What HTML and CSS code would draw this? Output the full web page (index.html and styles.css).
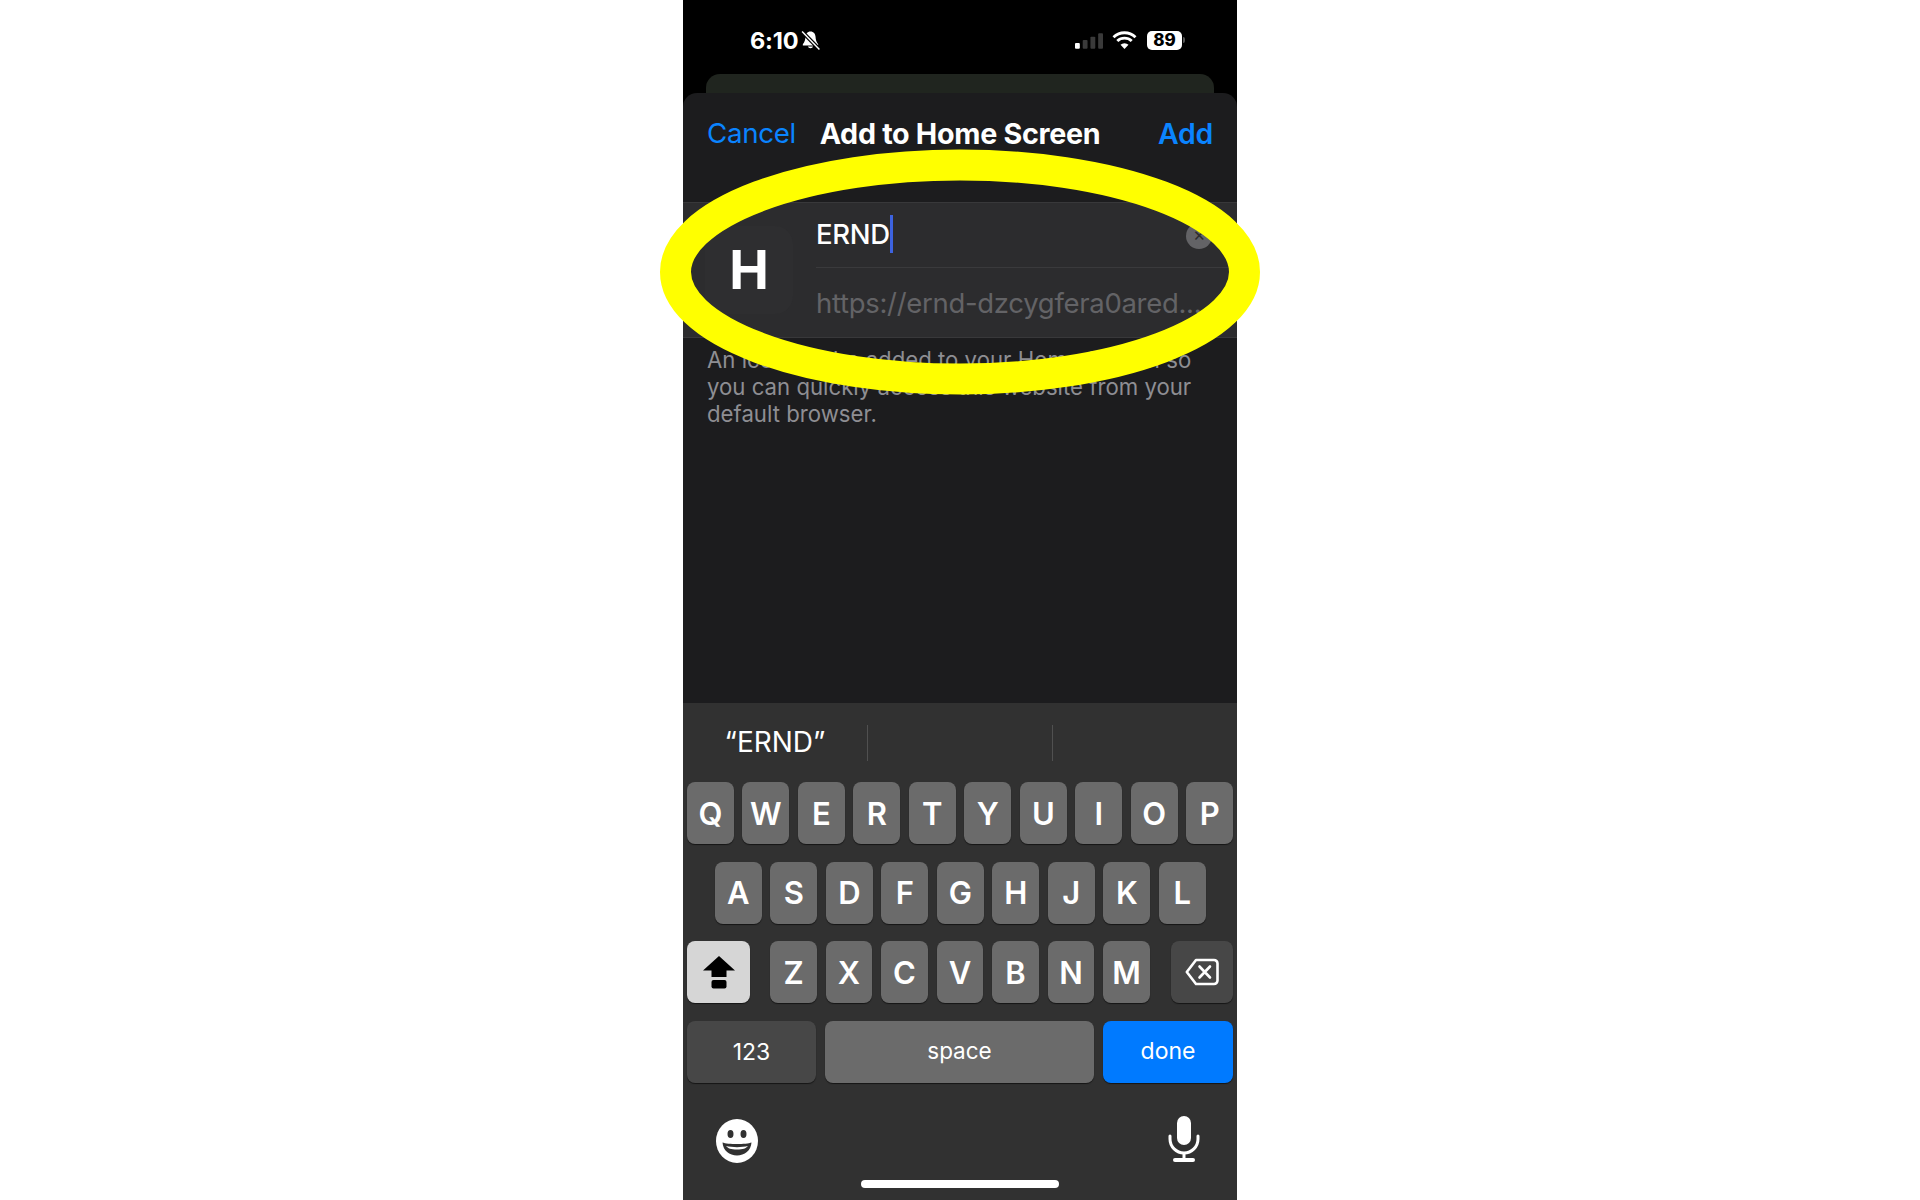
FILE: index.html
```html
<!DOCTYPE html>
<html lang="en">
<head>
    <title>Add to Home Screen</title>
    <meta charset="UTF-8" />
    <meta name="viewport" content="width=device-width" />
    <link rel="stylesheet" href="styles.css">
</head>
<body>
    <main class="phone">
        <div class="status-bar">
            <div class="status-left">
                <span class="time">6:10</span>
                <svg class="bell" viewBox="0 0 20 20">
                    <path d="M10 1.5c-3 0-4.6 2.300-4.800 5-.2 3-.7 5-2.500 7v1.200h14.600V13.500c-1.800-2-2.300-4-2.500-7-.2-2.700-1.800-5-4.800-5zM7.500 15.800a2.600 2.300 0 0 0 5 0z" fill="#fff"/>
                    <path d="M2 1.500 18.500 18.500" stroke="#000" stroke-width="3.600"/>
                    <path d="M2 1.500 18.500 18.500" stroke="#fff" stroke-width="1.400"/>
                </svg>
            </div>
            <div class="status-right">
                <svg class="signal" viewBox="0 0 29 16">
                    <rect x="0" y="10" width="5" height="6" rx="1" fill="#fff"/>
                    <rect x="8" y="7" width="5" height="9" rx="1" fill="#3a3a3a"/>
                    <rect x="16" y="3.500" width="5" height="12.500" rx="1" fill="#3a3a3a"/>
                    <rect x="24" y="0" width="5" height="16" rx="1" fill="#3a3a3a"/>
                </svg>
                <svg class="wifi" viewBox="0 0 25 18">
                    <path d="M1.500 6.200a16 16 0 0 1 22 0M5.300 10a10.500 10.500 0 0 1 14.400 0" fill="none" stroke="#fff" stroke-width="2.900"/>
                    <path d="M12.500 18 8.500 13.800a5.700 5.700 0 0 1 8 0z" fill="#fff"/>
                </svg>
                <div class="battery"><span>89</span></div>
                <div class="battery-tip"></div>
            </div>
        </div>

        <div class="card-behind"></div>

        <section class="sheet">
            <header class="sheet-nav">
                <span class="nav-btn">Cancel</span>
                <span class="nav-title">Add to Home Screen</span>
                <span class="nav-btn nav-add">Add</span>
            </header>

            <div class="form-row">
                <div class="app-icon">H</div>
                <div class="fields">
                    <div class="field">
                        <span class="name">ERND</span><span class="caret"></span>
                        <span class="clear">&#x2715;</span>
                    </div>
                    <div class="field url">https://ernd-dzcygfera0ared...</div>
                </div>
            </div>

            <p class="note">An icon will be added to your Home Screen so<br>you can quickly access this website from your<br>default browser.</p>
        </section>

        <section class="keyboard">
            <div class="suggestions">
                <span class="suggestion">“ERND”</span>
                <span class="suggestion"></span>
                <span class="suggestion"></span>
            </div>

            <div class="key-rows">
                <div class="key-row">
                    <span class="key">Q</span><span class="key">W</span><span class="key">E</span><span class="key">R</span><span class="key">T</span><span class="key">Y</span><span class="key">U</span><span class="key">I</span><span class="key">O</span><span class="key">P</span>
                </div>
                <div class="key-row row-inset">
                    <span class="key">A</span><span class="key">S</span><span class="key">D</span><span class="key">F</span><span class="key">G</span><span class="key">H</span><span class="key">J</span><span class="key">K</span><span class="key">L</span>
                </div>
                <div class="key-row row-shift">
                    <span class="key key-shift">
                        <svg viewBox="0 0 34 34" width="34" height="34">
                            <path d="M17 1 33 15.500H24.500V22H9.500V15.500H1z" fill="#000"/>
                            <rect x="9.500" y="25" width="15" height="8.500" rx="2" fill="#000"/>
                        </svg>
                    </span>
                    <div class="letters">
                        <span class="key">Z</span><span class="key">X</span><span class="key">C</span><span class="key">V</span><span class="key">B</span><span class="key">N</span><span class="key">M</span>
                    </div>
                    <span class="key key-dark key-back">
                        <svg viewBox="0 0 34 28" width="34" height="28">
                            <path d="M11 2H29a3.500 3.500 0 0 1 3.500 3.500v17a3.500 3.500 0 0 1-3.500 3.500H11L1.800 14z" fill="none" stroke="#fff" stroke-width="2.600" stroke-linejoin="round"/>
                            <path d="M14.500 8.500 25 19.500M25 8.500 14.500 19.500" stroke="#fff" stroke-width="2.600" stroke-linecap="round"/>
                        </svg>
                    </span>
                </div>
                <div class="key-row row-bottom">
                    <span class="key key-dark key-123">123</span>
                    <span class="key key-space">space</span>
                    <span class="key key-done">done</span>
                </div>
            </div>

            <div class="kb-bottom">
                <svg class="emoji" viewBox="0 0 42 44">
                    <ellipse cx="21" cy="22" rx="21" ry="22" fill="#fff"/>
                    <ellipse cx="14.500" cy="15" rx="3" ry="4" fill="#313131"/>
                    <ellipse cx="27.500" cy="15" rx="3" ry="4" fill="#313131"/>
                    <path d="M6.500 23.500c5 2 24 2 29 0-.5 8-7 13-14.500 13s-14-5-14.500-13z" fill="#313131"/>
                    <path d="M10 27c6 1.500 16 1.500 22 0-2 2.500-5 3.500-11 3.500s-9-1-11-3.500z" fill="#fff"/>
                </svg>
                <svg class="mic" viewBox="0 0 32 46">
                    <rect x="9" y="0" width="14" height="29" rx="7" fill="#fff"/>
                    <path d="M2 20v3a14 14 0 0 0 28 0v-3" fill="none" stroke="#fff" stroke-width="3" stroke-linecap="round"/>
                    <path d="M16 37v6" stroke="#fff" stroke-width="3"/>
                    <rect x="5" y="42" width="22" height="4" rx="2" fill="#fff"/>
                </svg>
            </div>
            <div class="home-bar"></div>
        </section>
    </main>

    <!-- yellow marker circled over the screenshot -->
    <svg class="marker" viewBox="0 0 604 246">
        <ellipse cx="302" cy="123" rx="284.500" ry="107" fill="none" stroke="#ffff00" stroke-width="31"/>
    </svg>
</body>
</html>
```

FILE: styles.css
```css
* {
    box-sizing: border-box;
}
html, body {
    height: 100%;
}
body {
    margin: 0;
    background: #fff;
    font-family: Inter, "Liberation Sans", sans-serif;
    color: #fff;
    display: flex;
    justify-content: center;
    overflow: hidden;
    position: relative;
}
.phone {
    width: 554px;
    height: 1200px;
    background: #000;
    display: flex;
    flex-direction: column;
}

/* status bar */
.status-bar {
    height: 74px;
    flex: none;
    padding: 27px 52px 0 67px;
    display: flex;
    justify-content: space-between;
    align-items: flex-start;
}
.status-left, .status-right {
    display: flex;
    align-items: center;
    height: 26px;
}
.time {
    font-size: 23.5px;
    font-weight: 700;
    letter-spacing: -0.2px;
}
.bell {
    width: 21px;
    height: 21px;
    margin-left: 2px;
}
.signal {
    width: 28px;
    height: 16px;
    margin-right: 9px;
    margin-top: 2px;
}
.wifi {
    width: 25px;
    height: 18px;
    margin-right: 10px;
}
.battery {
    width: 35px;
    height: 19px;
    background: #fff;
    border-radius: 5px;
    color: #000;
    font-size: 17px;
    font-weight: 800;
    line-height: 19px;
    text-align: center;
}
.battery-tip {
    width: 2px;
    height: 6px;
    margin-left: 1px;
    background: #555;
    border-radius: 0 2px 2px 0;
}
.card-behind {
    height: 30px;
    margin: 0 23px -11px;
    flex: none;
    background: #20251f;
    border-radius: 14px 14px 0 0;
}

/* sheet */
.sheet {
    flex: 1;
    background: #1c1c1e;
    border-radius: 14px 14px 0 0;
    position: relative;
}
.sheet-nav {
    height: 109px;
    padding: 0 24px 29px;
    display: grid;
    grid-template-columns: 1fr auto 1fr;
    align-items: center;
}
.nav-btn {
    color: #0a84ff;
    font-size: 27.700px;
    letter-spacing: -0.3px;
}
.nav-add {
    font-weight: 600;
    font-size: 28.500px;
    text-align: right;
}
.nav-title {
    font-weight: 700;
    font-size: 28.700px;
    letter-spacing: -0.3px;
}
.form-row {
    height: 136px;
    background: #2c2c2e;
    border-top: 1px solid #38383a;
    border-bottom: 1px solid #38383a;
    display: flex;
    align-items: center;
}
.app-icon {
    width: 88px;
    height: 88px;
    margin: 0 23px 0 22px;
    background: #2e2e30;
    border-radius: 18px;
    font-size: 53px;
    font-weight: 700;
    line-height: 88px;
    text-align: center;
    flex: none;
}
.fields {
    flex: 1;
    min-width: 0;
    align-self: stretch;
    display: flex;
    flex-direction: column;
}
.field {
    height: 65px;
    padding-bottom: 2px;
    display: flex;
    align-items: center;
    font-size: 27.500px;
    letter-spacing: -0.3px;
    border-bottom: 1px solid #3a3a3c;
    position: relative;
    white-space: nowrap;
}
.name {
    font-weight: 500;
}
.caret {
    width: 3px;
    height: 38px;
    background: #3d63e0;
}
.clear {
    position: absolute;
    right: 25px;
    top: 20px;
    width: 26px;
    height: 26px;
    border-radius: 50%;
    background: #636366;
    color: #2c2c2e;
    font-size: 15px;
    line-height: 26px;
    text-align: center;
}
.url {
    flex: 1;
    padding-bottom: 0;
    border-bottom: 0;
    color: #636366;
    overflow: hidden;
}
.note {
    margin: 8px 24px 0;
    font-size: 22.200px;
    line-height: 27px;
    color: #8e8e93;
}

/* keyboard */
.keyboard {
    height: 497px;
    flex: none;
    background: #313131;
    position: relative;
}
.suggestions {
    height: 79px;
    display: grid;
    grid-template-columns: 185px 185px 1fr;
    align-items: center;
}
.suggestion {
    height: 36px;
    font-size: 28px;
    line-height: 34px;
    text-align: center;
    border-right: 1px solid #505050;
}
.suggestion:last-child {
    border-right: 0;
}
.key-rows {
    display: flex;
    flex-direction: column;
    gap: 17.500px;
    padding: 0 4px;
}
.key-row {
    height: 62px;
    display: flex;
    gap: 8.700px;
}
.row-inset {
    padding-left: 28px;
}
.row-shift {
    justify-content: space-between;
}
.letters {
    display: flex;
    gap: 8.700px;
    margin-left: -1px;
}
.key {
    width: 46.800px;
    height: 62px;
    flex: none;
    display: flex;
    align-items: center;
    justify-content: center;
    background: #6b6b6b;
    border-radius: 8px;
    box-shadow: 0 1px 1px #161616;
    font-size: 31px;
    font-weight: 600;
}
.key-shift {
    width: 63px;
    background: #d6d6d6;
}
.key-dark {
    background: #474747;
}
.key-back {
    width: 62px;
}
.key-123 {
    width: 129px;
    font-size: 23px;
    font-weight: 400;
}
.key-space {
    flex: 1;
    padding-bottom: 2px;
    font-size: 22.500px;
    font-weight: 400;
}
.key-done {
    width: 130px;
    padding-bottom: 2px;
    background: #007aff;
    font-size: 23px;
    font-weight: 400;
}
.kb-bottom {
    padding: 36px 37px 0 33px;
    display: flex;
    justify-content: space-between;
    align-items: center;
}
.emoji {
    width: 42px;
    height: 44px;
}
.mic {
    width: 32px;
    height: 46px;
    margin-top: -3px;
}
.home-bar {
    position: absolute;
    left: 178px;
    bottom: 12px;
    width: 198px;
    height: 8px;
    background: #fff;
    border-radius: 4px;
}

/* marker sits over the phone */
.marker {
    position: absolute;
    left: 658px;
    top: 149px;
    width: 604px;
    height: 246px;
}
```
